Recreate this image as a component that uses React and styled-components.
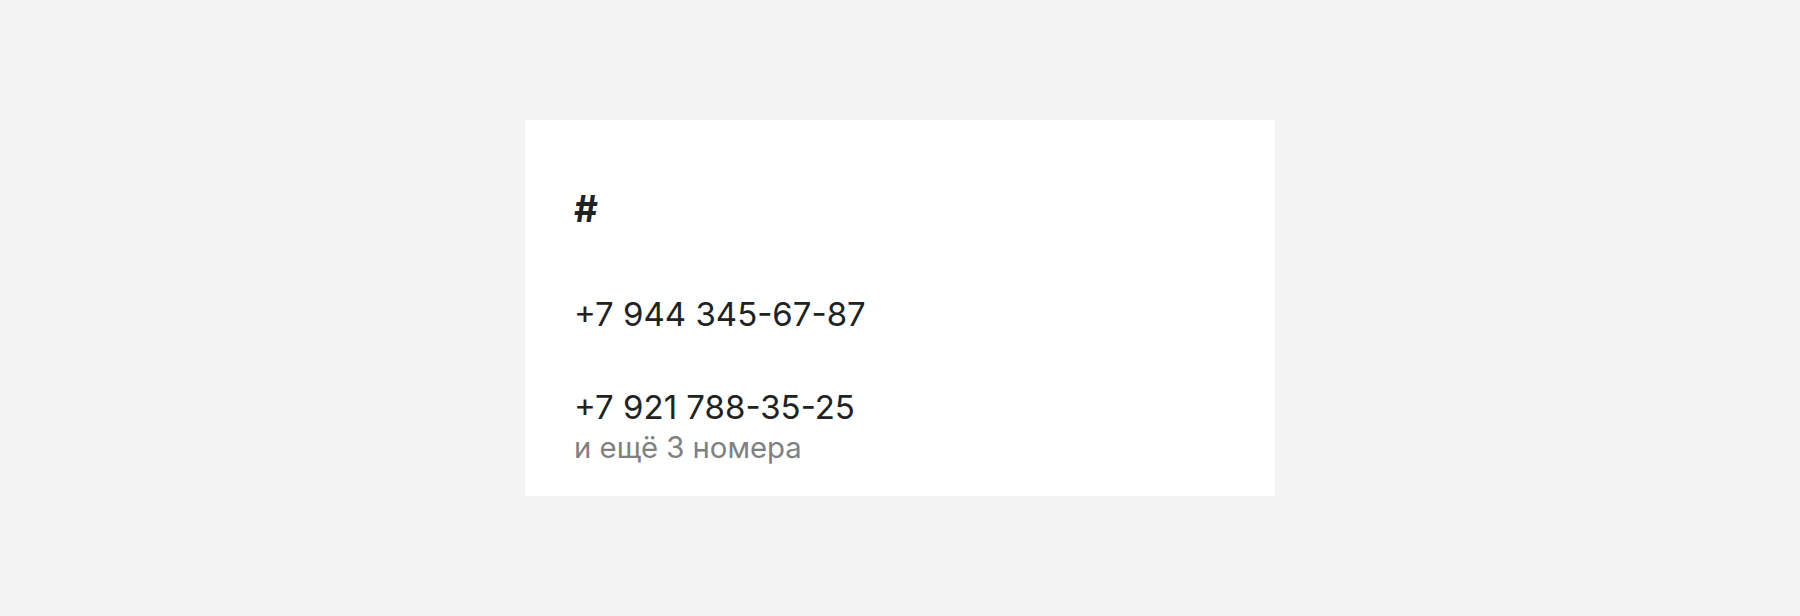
import React from 'react';
import styled, { createGlobalStyle } from 'styled-components';

const GlobalStyle = createGlobalStyle`
  html, body {
    margin: 0;
    padding: 0;
    background: #f4f4f4;
  }
  body {
    font-family: Inter, 'Noto Sans', sans-serif;
  }
`;

// page
const Page = styled.div`
  min-height: 616px;
  display: flex;
  align-items: center;
  justify-content: center;
`;

const Card = styled.div`
  width: 750px;
  height: 376px;
  box-sizing: border-box;
  background: #ffffff;
  padding: 67px 48px 0 49px;
  display: flex;
  flex-direction: column;
`;

const Hash = styled.h2`
  margin: 0;
  font-size: 37px;
  line-height: 44px;
  font-weight: 700;
  color: #222222;
`;

const PhoneBlock = styled.div`
  display: flex;
  flex-direction: column;
  margin-top: ${props => props.gap}px;
`;

const Phone = styled.div`
  font-size: 33px;
  line-height: 38px;
  font-weight: 400;
  color: #222222;
`;

const More = styled.div`
  margin-top: 6px;
  font-size: 29.3px;
  line-height: 32px;
  color: #808080;
`;

const phones = [
  { number: '+7 944 345-67-87', gap: 64 },
  { number: '+7 921 788-35-25', gap: 55, more: 'и ещё 3 номера' },
];

const App = () => {
  return (
    <>
      <GlobalStyle />
      <Page>
        <Card>
          <Hash>#</Hash>
          {phones.map(p => (
            <PhoneBlock key={p.number} gap={p.gap}>
              <Phone>{p.number}</Phone>
              {p.more && <More>{p.more}</More>}
            </PhoneBlock>
          ))}
        </Card>
      </Page>
    </>
  );
};

export default App;
